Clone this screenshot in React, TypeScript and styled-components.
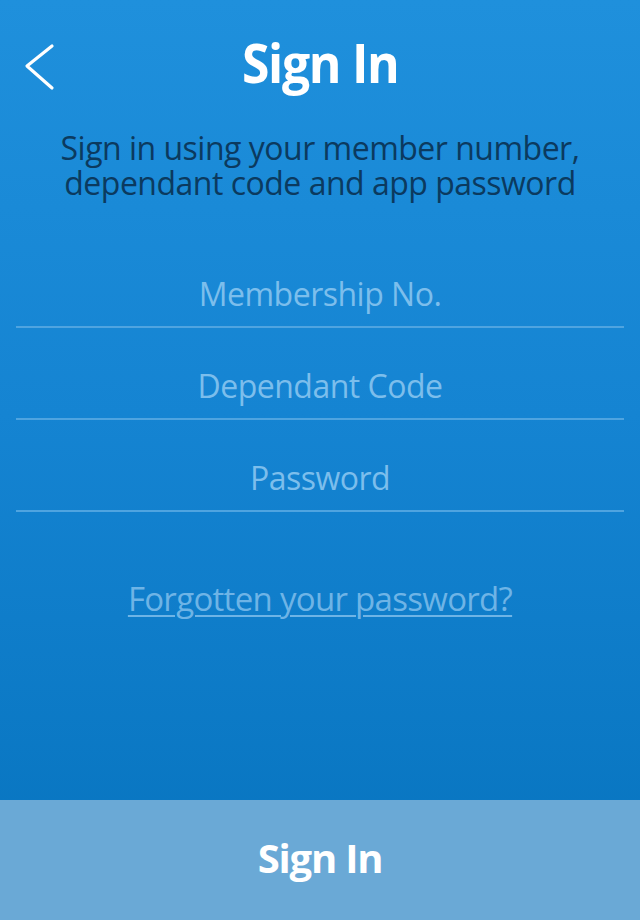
import React from 'react';
import styled, { createGlobalStyle } from 'styled-components';

const GlobalStyle = createGlobalStyle`
    html, body {
        margin: 0;
        padding: 0;
        height: 100%;
    }
    body {
        font-family: "Open Sans", "Noto Sans", sans-serif;
    }
`;

const Screen = styled.div`
    width: 640px;
    height: 920px;
    display: flex;
    flex-direction: column;
    background: linear-gradient(180deg, #1f90dc 0%, #1584d2 45%, #0673be 100%);
    overflow: hidden;
`;

const Header = styled.header`
    height: 128px;
    display: flex;
    align-items: center;
    justify-content: center;
    position: relative;
`;

const BackButton = styled.button`
    position: absolute;
    left: 22px;
    top: 42px;
    width: 36px;
    height: 50px;
    padding: 0;
    border: none;
    background: none;
    cursor: pointer;
`;

const Title = styled.h1`
    margin: 0 0 4px;
    color: #fff;
    font-size: 53px;
    font-weight: 700;
    letter-spacing: -1.4px;
    transform: scaleX(0.94);
`;

const Intro = styled.p`
    margin: 0;
    padding-top: 2px;
    text-align: center;
    color: #0b3a5f;
    font-size: 32px;
    line-height: 35px;
    letter-spacing: -0.5px;
`;

const Form = styled.form`
    display: flex;
    flex-direction: column;
    padding: 36px 16px 0;
`;

const Field = styled.input`
    box-sizing: border-box;
    height: 92px;
    padding: 24px 0 0;
    border: none;
    border-bottom: 2px solid #4fa4e0;
    background: transparent;
    text-align: center;
    font-family: inherit;
    font-size: 32px;
    color: #fff;
    outline: none;

    &::placeholder {
        color: #7cbeec;
        letter-spacing: -0.5px;
    }
`;

const Forgot = styled.a`
    align-self: center;
    margin-top: 64px;
    color: #6eb4e6;
    font-size: 33px;
    letter-spacing: -0.7px;
    text-decoration: underline;
    text-decoration-thickness: 2px;
    text-underline-offset: 4px;
`;

const Spacer = styled.div`
    flex: 1;
`;

const SubmitButton = styled.button`
    height: 120px;
    padding: 0 0 6px;
    border: none;
    background: #6aa9d6;
    color: #fff;
    font-family: inherit;
    font-size: 40px;
    font-weight: 700;
    letter-spacing: -1.2px;
    cursor: pointer;
`;

const fields = ['Membership No.', 'Dependant Code', 'Password'];

const Chevron = () => (
    <svg width="36" height="50" viewBox="0 0 36 50">
        <polyline points="30,4 5,24 30,46" fill="none" stroke="#fff" strokeWidth="3.2" strokeLinecap="round" strokeLinejoin="round" />
    </svg>
);

const App = () => (
    <Screen>
        <GlobalStyle />
        <Header>
            <BackButton aria-label="Back">
                <Chevron />
            </BackButton>
            <Title>Sign In</Title>
        </Header>
        <Intro>
            Sign in using your member number,<br />
            dependant code and app password
        </Intro>
        <Form>
            {fields.map(f => (
                <Field key={f} placeholder={f} type={f === 'Password' ? 'password' : 'text'} />
            ))}
            <Forgot href="#">Forgotten your password?</Forgot>
        </Form>
        <Spacer />
        <SubmitButton>Sign In</SubmitButton>
    </Screen>
);

export default App;
